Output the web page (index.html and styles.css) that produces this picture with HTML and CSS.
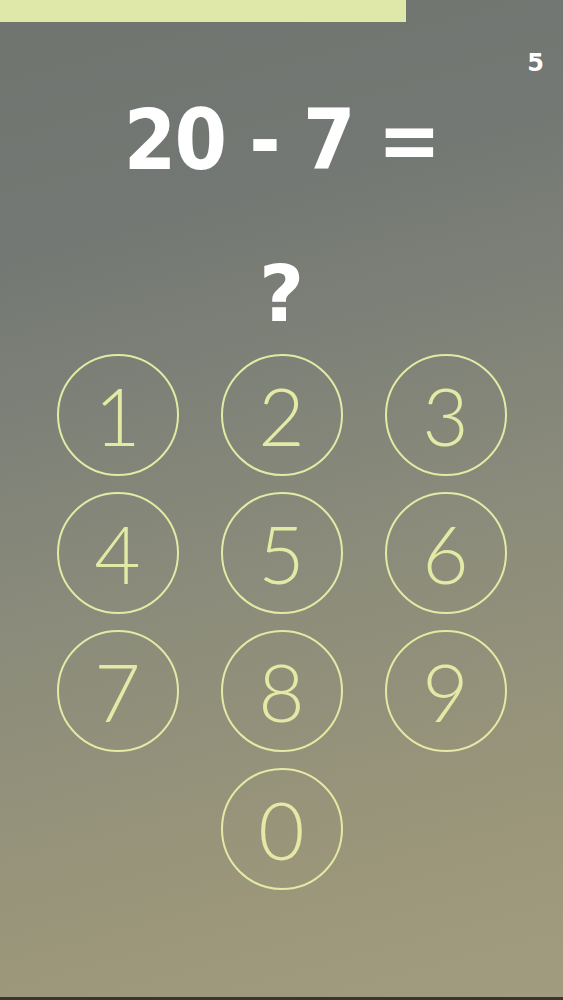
FILE: index.html
```html
<!DOCTYPE html>
<html>
<head>
<meta charset="utf-8">
<link rel="stylesheet" href="styles.css">
</head>
<body>
<div class="screen">
  <div class="progress"><div class="progress-fill" style="width:406px"></div></div>
  <div class="counter-row"><span class="counter">5</span></div>
  <div class="equation">20 - 7 =</div>
  <div class="answer">?</div>
  <div class="keypad">
    <button class="key">1</button>
    <button class="key">2</button>
    <button class="key">3</button>
    <button class="key">4</button>
    <button class="key">5</button>
    <button class="key">6</button>
    <button class="key">7</button>
    <button class="key">8</button>
    <button class="key">9</button>
    <button class="key key-zero">0</button>
  </div>
</div>
</body>
</html>
```
FILE: styles.css
```css
html, body {
  margin: 0;
  padding: 0;
}
body {
  width: 563px;
  height: 1000px;
  overflow: hidden;
}
.screen {
  width: 563px;
  height: 1000px;
  box-sizing: border-box;
  border-bottom: 3px solid #3a3628;
  background: linear-gradient(165deg, #6f746f 0%, #737874 22%, #8a8b7b 55%, #9c977a 85%, #a19c80 100%);
  display: flex;
  flex-direction: column;
  align-items: center;
  font-family: "DejaVu Sans", sans-serif;
}
.progress {
  align-self: stretch;
  height: 22px;
}
.progress-fill {
  height: 22px;
  background: #dfe8a8;
}
.counter-row {
  align-self: stretch;
  display: flex;
  justify-content: flex-end;
  padding-right: 19px;
  height: 40px;
  align-items: center;
  margin-top: 21px;
}
.counter {
  color: #ffffff;
  font-weight: bold;
  font-size: 24px;
  font-family: "DejaVu Sans", sans-serif;
}
.equation {
  color: #ffffff;
  font-weight: bold;
  font-size: 84px;
  line-height: 100px;
  letter-spacing: -2px;
  margin-top: 7px;
  font-family: "DejaVu Sans Condensed", "DejaVu Sans", sans-serif;
}
.answer {
  color: #ffffff;
  font-weight: bold;
  font-size: 78px;
  line-height: 90px;
  margin-top: 59px;
  font-family: "DejaVu Sans", sans-serif;
}
.keypad {
  margin-top: 15px;
  display: grid;
  grid-template-columns: repeat(3, 122px);
  column-gap: 42px;
  row-gap: 16px;
}
.key {
  width: 122px;
  height: 122px;
  border-radius: 50%;
  border: 2px solid #e2eaa5;
  background: transparent;
  color: #e2eaa5;
  font-family: "Lato", sans-serif;
  font-weight: 300;
  font-size: 80px;
  line-height: 1;
  padding: 0;
  display: flex;
  align-items: center;
  justify-content: center;
}
.key-zero {
  grid-column: 2;
}
```
